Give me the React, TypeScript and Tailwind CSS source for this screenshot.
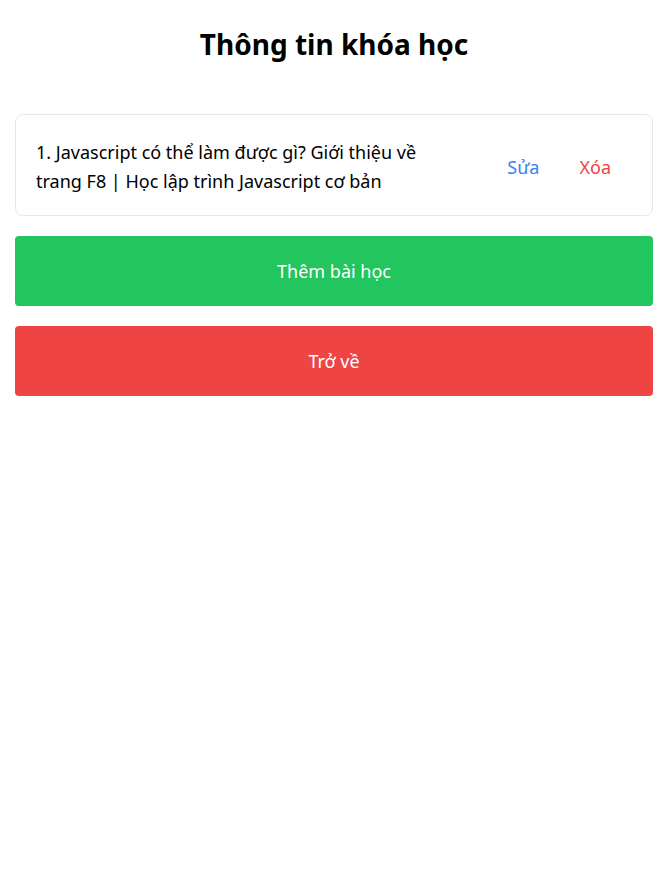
export default function App() {
  return (
    <div className="min-h-screen bg-white pl-[15px] pr-[13px] font-['Noto_Sans',sans-serif] text-black">
      <h1 className="pt-[22px] pb-[48px] text-center text-[28px] font-bold leading-[44px]">
        Thông tin khóa học
      </h1>

      <div className="flex flex-col gap-5">
        <div className="flex items-center rounded-lg border border-gray-200 pt-[23px] pb-[19px] pl-5 pr-[21px]">
          <p className="flex-1 pr-[36px] text-[18px] leading-[29px]">
            1. Javascript có thể làm được gì? Giới thiệu về trang F8 | Học lập trình Javascript cơ bản
          </p>
          <button className="px-5 text-[18px] text-[#3b82f6]">Sửa</button>
          <button className="px-5 text-[18px] text-[#ef4444]">Xóa</button>
        </div>

        <button className="h-[70px] w-full rounded bg-[#22c55e] text-[18px] text-white">
          Thêm bài học
        </button>
        <button className="h-[70px] w-full rounded bg-[#ef4444] text-[18px] text-white">
          Trở về
        </button>
      </div>
    </div>
  );
}
